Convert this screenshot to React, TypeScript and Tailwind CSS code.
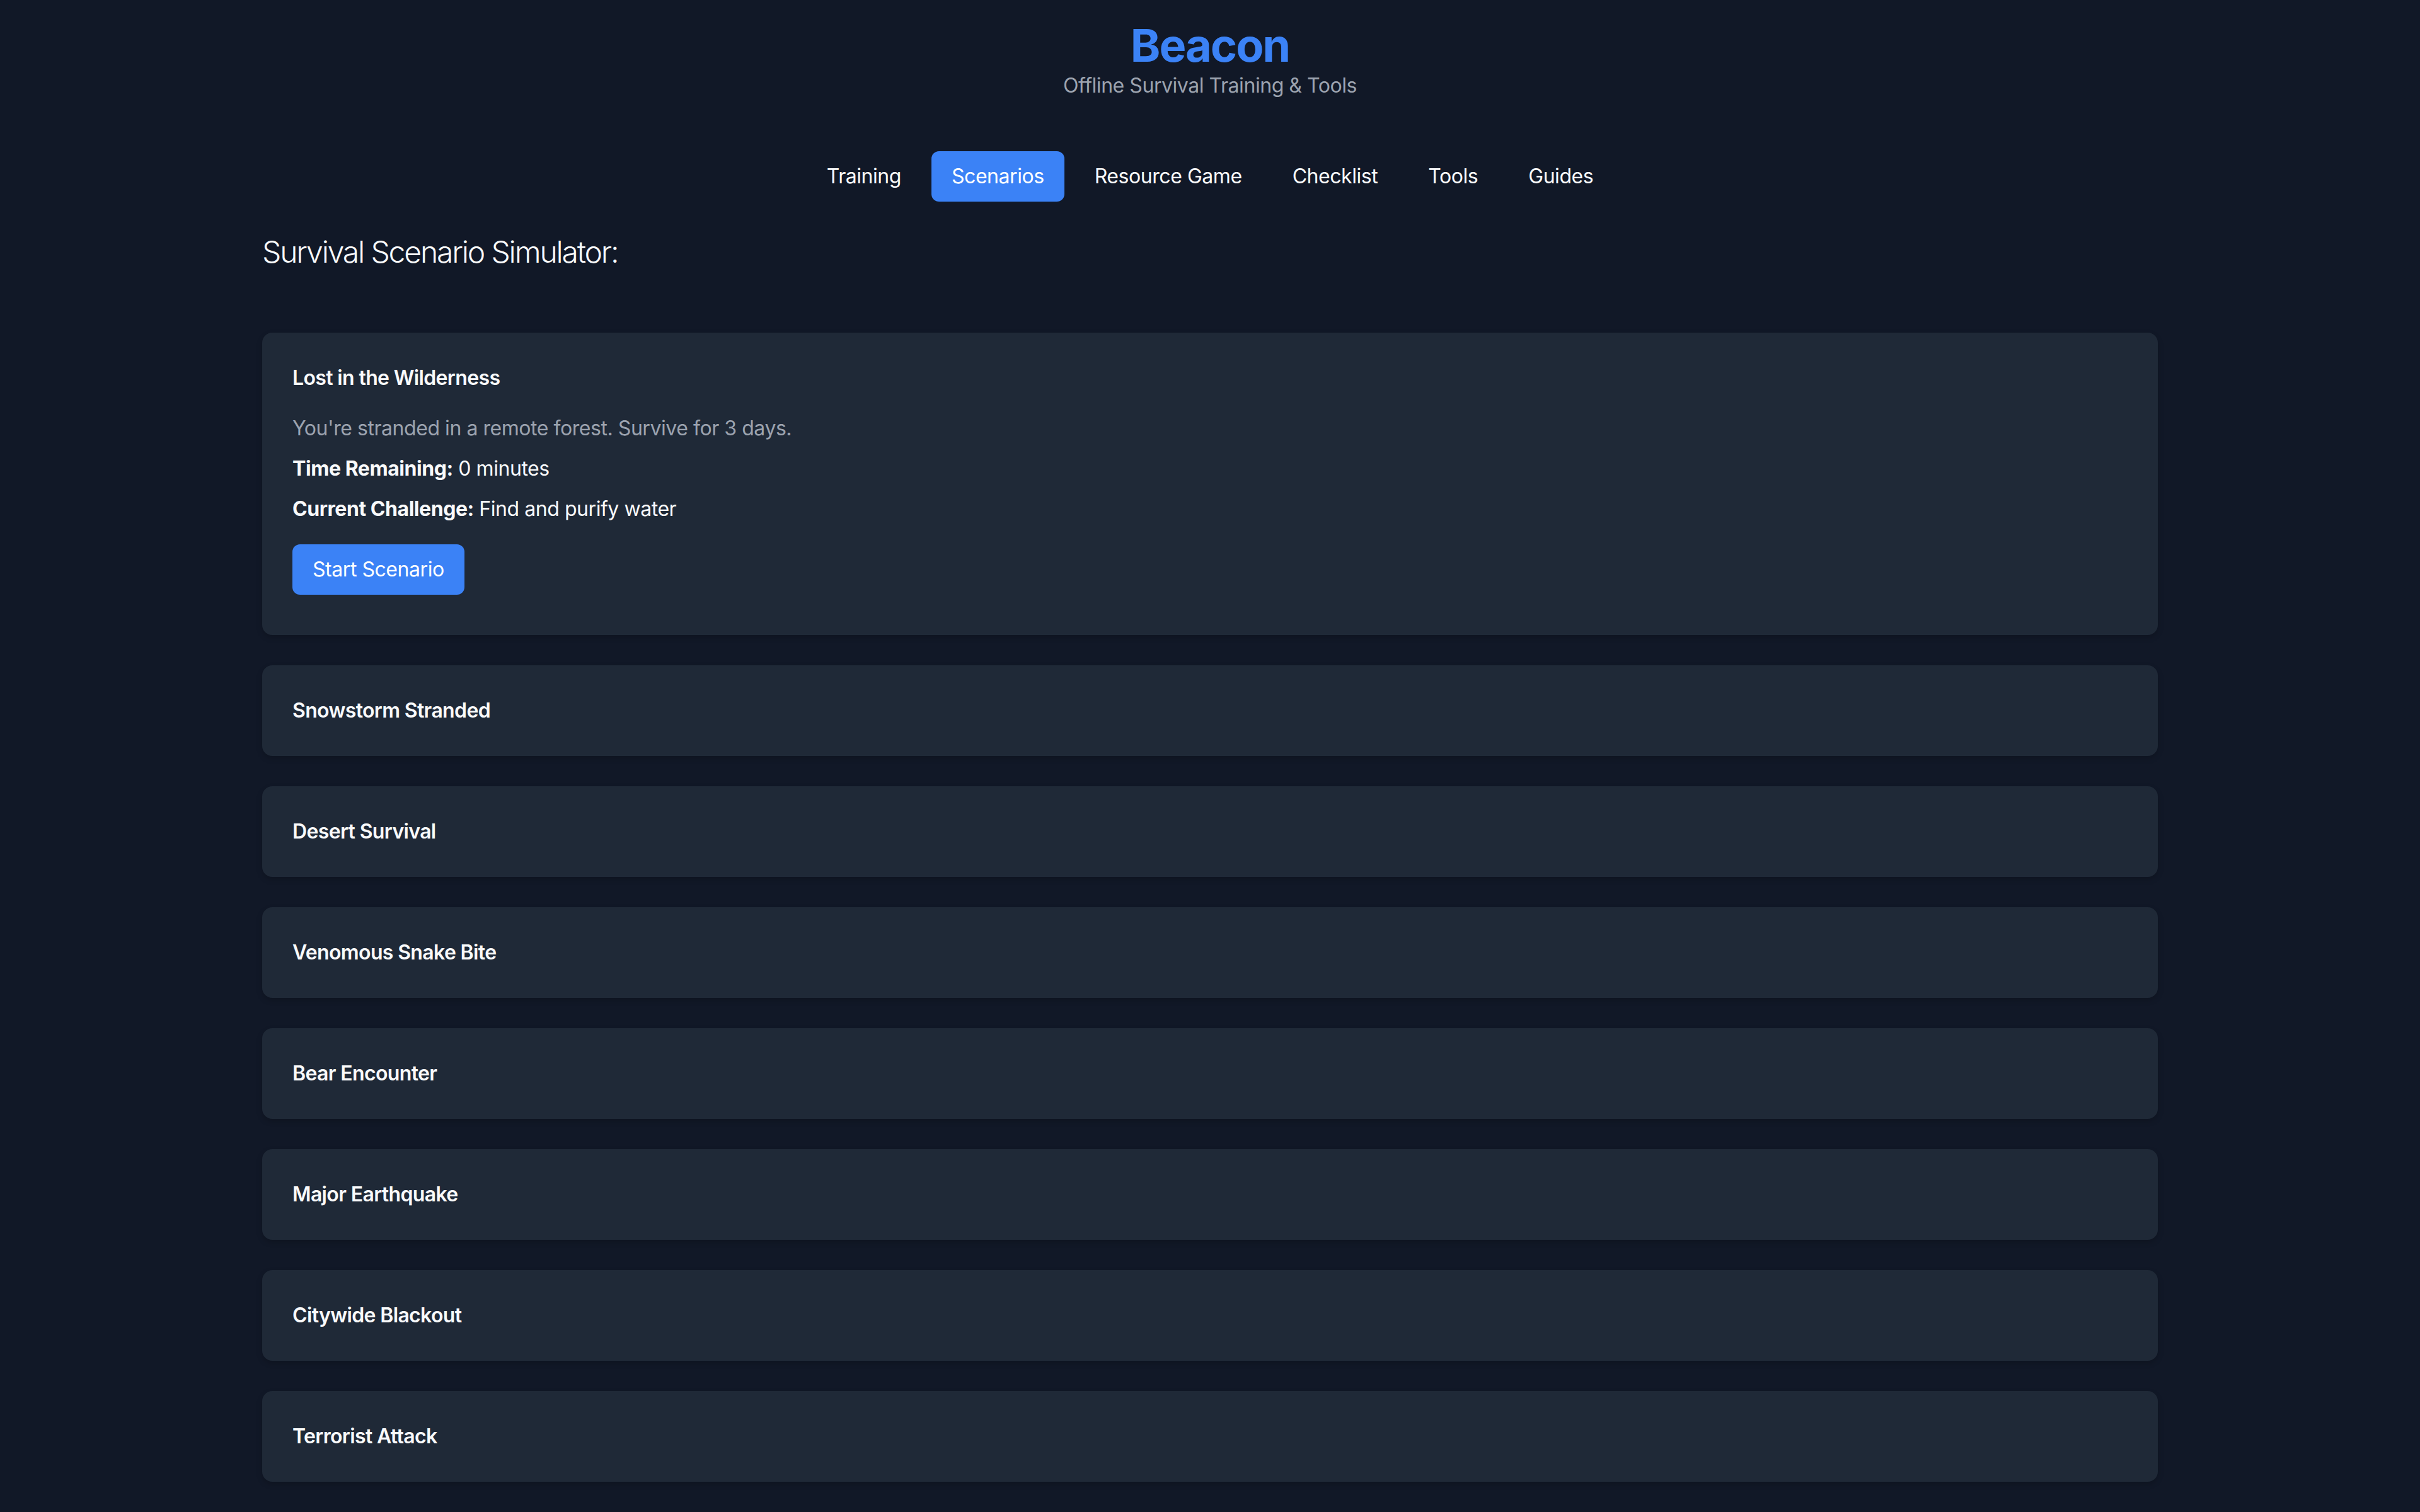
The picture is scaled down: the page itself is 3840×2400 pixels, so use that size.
import React from "react";

const tabs = ["Training", "Scenarios", "Resource Game", "Checklist", "Tools", "Guides"];
const others = [
  "Snowstorm Stranded",
  "Desert Survival",
  "Venomous Snake Bite",
  "Bear Encounter",
  "Major Earthquake",
  "Citywide Blackout",
  "Terrorist Attack",
];

export default function App() {
  return (
    <div
      className="min-h-screen bg-[#111827] text-[#f9fafb] pb-[96px] tracking-[-0.028em]"
      style={{ fontFamily: 'Inter, "Noto Sans", "Liberation Sans", sans-serif' }}
    >
      <header className="pt-[32px] text-center">
        <h1 className="text-[72px] leading-[80px] font-bold text-[#3b82f6] tracking-[-0.028em]">Beacon</h1>
        <p className="text-[32px] leading-[48px] text-[#9ca3af]">Offline Survival Training &amp; Tools</p>
      </header>

      <nav className="mt-[80px] flex justify-center gap-[16px]">
        {tabs.map((t) => (
          <button
            key={t}
            className={
              t === "Scenarios"
                ? "px-[32px] py-[16px] text-[32px] leading-[48px] rounded-[12px] bg-[#3b82f6] text-white"
                : "px-[32px] py-[16px] text-[32px] leading-[48px] rounded-[12px] text-[#f9fafb]"
            }
          >
            {t}
          </button>
        ))}
      </nav>

      <main className="mx-auto w-full max-w-[3008px]">
        <h2 className="mt-[48px] text-[48px] leading-[64px] font-light tracking-[-0.045em] text-[#f9fafb]">
          Survival Scenario Simulator:
        </h2>

        <div className="mt-[96px] flex flex-col gap-[48px]">
          <div className="rounded-[16px] bg-[#1f2937] px-[48px] pt-[48px] pb-[64px] shadow-[0_4px_10px_rgba(0,0,0,0.18)]">
            <h3 className="text-[32px] leading-[48px] font-semibold tracking-[-0.02em]">Lost in the Wilderness</h3>
            <p className="mt-[32px] text-[32px] leading-[48px] text-[#9ca3af]">
              You're stranded in a remote forest. Survive for 3 days.
            </p>
            <p className="mt-[16px] text-[32px] leading-[48px]">
              <span className="font-bold">Time Remaining:</span> 0 minutes
            </p>
            <p className="mt-[16px] text-[32px] leading-[48px]">
              <span className="font-bold">Current Challenge:</span> Find and purify water
            </p>
            <button className="mt-[32px] px-[32px] py-[16px] text-[32px] leading-[48px] rounded-[12px] bg-[#3b82f6] text-white">
              Start Scenario
            </button>
          </div>

          {others.map((o) => (
            <div
              key={o}
              className="rounded-[16px] bg-[#1f2937] p-[48px] shadow-[0_4px_10px_rgba(0,0,0,0.18)]"
            >
              <h3 className="text-[32px] leading-[48px] font-semibold tracking-[-0.02em]">{o}</h3>
            </div>
          ))}
        </div>
      </main>
    </div>
  );
}
